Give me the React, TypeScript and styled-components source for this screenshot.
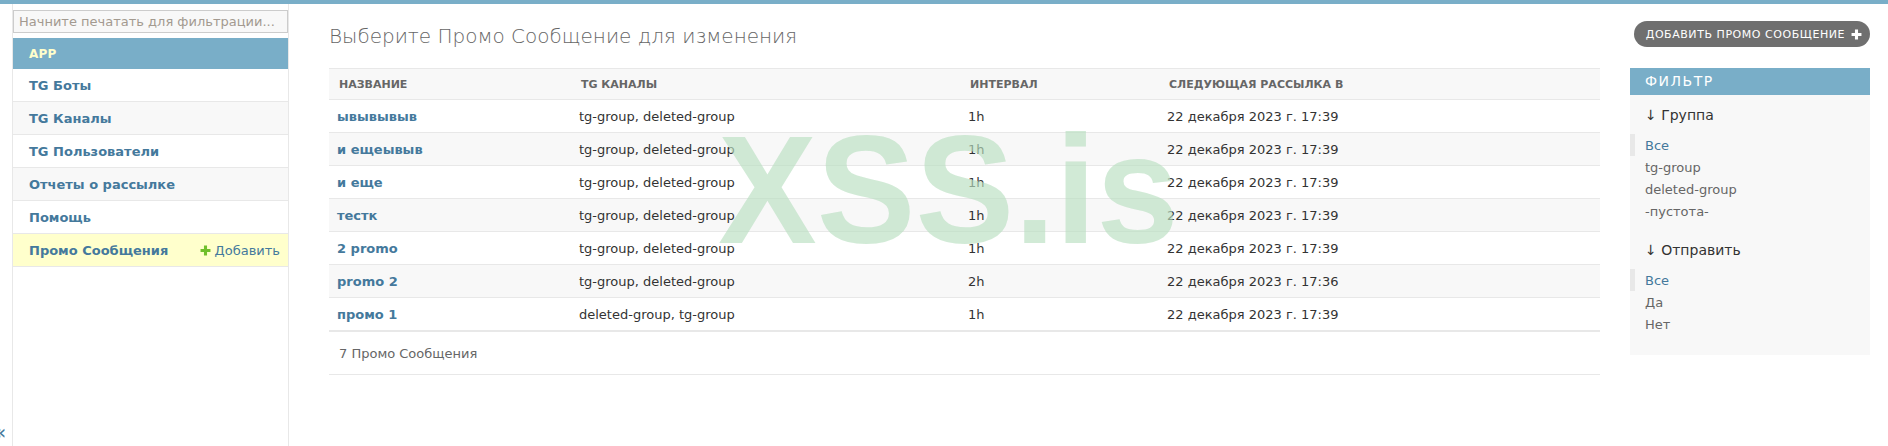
import styled, { createGlobalStyle } from "styled-components";

const GlobalStyle = createGlobalStyle`
  html, body {
    margin: 0;
    padding: 0;
    height: 100%;
    background: #fff;
    color: #333;
    font-family: "DejaVu Sans", "Liberation Sans", sans-serif;
    font-size: 14px;
    overflow: hidden;
  }
  * { box-sizing: border-box; }
`;

const Page = styled.div`
  position: relative;
  height: 446px;
  border-top: 4px solid #79aec8;
  display: flex;
`;

const Sidebar = styled.nav`
  width: 277px;
  margin-left: 12px;
  border-left: 1px solid #e8e8e8;
  border-right: 1px solid #e8e8e8;
  flex-shrink: 0;
`;

const Search = styled.input`
  display: block;
  width: 100%;
  height: 23px;
  margin: 6px 0 5px;
  padding: 0 5px;
  border: 1px solid #ccc;
  background: #f8f8f8;
  font: 13px "DejaVu Sans", sans-serif;
  color: #333;
  &::placeholder { color: #a39a90; opacity: 1; }
`;

const AppCaption = styled.div`
  height: 31px;
  line-height: 32px;
  padding-left: 16px;
  background: #79aec8;
  color: #ffc;
  font-size: 12px;
  font-weight: 700;
  letter-spacing: 0.2px;
`;

const NavRow = styled.div<{ $bg: string }>`
  height: 33px;
  padding: 1px 8px 0 16px;
  display: flex;
  align-items: center;
  justify-content: space-between;
  background: ${(p) => p.$bg};
  border-bottom: 1px solid #e8e8e8;
  font-size: 13px;
  color: #44799c;
`;

const NavName = styled.span`
  font-weight: 700;
`;

const AddLink = styled.span`
  display: flex;
  align-items: center;
  gap: 4px;
`;

const Collapse = styled.span`
  position: absolute;
  left: -6px;
  top: 416px;
  font-size: 20px;
  line-height: 24px;
  color: #44799c;
`;

const Content = styled.main`
  flex: 1;
  min-width: 0;
  padding: 20px 18px 0 40px;
`;

const TitleRow = styled.div`
  display: flex;
  justify-content: space-between;
  align-items: flex-start;
  height: 44px;
`;

const Title = styled.h1`
  margin: 0;
  font-size: 20px;
  line-height: 24px;
  font-weight: 300;
  color: #666;
`;

const AddButton = styled.a`
  margin-top: -3px;
  height: 26px;
  padding: 0 8px 0 12px;
  display: flex;
  align-items: center;
  gap: 6px;
  border-radius: 13px;
  background: #6f6f6f;
  color: #fff;
  font-size: 11px;
  letter-spacing: 0.55px;
`;

const Columns = styled.div`
  display: flex;
  gap: 30px;
  align-items: flex-start;
`;

const ListArea = styled.div`
  flex: 1;
  min-width: 0;
`;

const Table = styled.table`
  width: 100%;
  table-layout: fixed;
  border-collapse: collapse;
  border-bottom: 2px solid #e8e8e8;
`;

const Col = styled.col<{ $w?: number }>`
  width: ${(p) => (p.$w ? `${p.$w}px` : "auto")};
`;

const Th = styled.th`
  height: 31px;
  padding: 0 10px;
  background: #f8f8f8;
  border-top: 1px solid #e8e8e8;
  border-bottom: 1px solid #e8e8e8;
  text-align: left;
  font-size: 11px;
  font-weight: 700;
  text-transform: uppercase;
  color: #666;
`;

const Tr = styled.tr`
  &:nth-child(even) td { background: #f8f8f8; }
  &:last-child td { border-bottom: 0; }
`;

const Td = styled.td`
  height: 33px;
  padding: 1px 8px 0;
  border-bottom: 1px solid #e8e8e8;
  background: #fff;
  font-size: 13px;
  color: #333;
`;

const NameLink = styled.a`
  font-weight: 700;
  color: #44799c;
`;

const Paginator = styled.p`
  margin: 0;
  height: 43px;
  line-height: 43px;
  padding-left: 10px;
  border-bottom: 1px solid #e8e8e8;
  font-size: 13px;
  color: #666;
`;

const FilterPanel = styled.aside`
  width: 240px;
  flex-shrink: 0;
  background: #f8f8f8;
  padding-bottom: 20px;
`;

const FilterTitle = styled.h2`
  margin: 0;
  height: 27px;
  line-height: 27px;
  padding-left: 15px;
  background: #79aec8;
  color: #fff;
  font-size: 14px;
  font-weight: 400;
  letter-spacing: 1.5px;
`;

const FilterHeading = styled.h3`
  margin: 0;
  padding: 12px 15px 0;
  height: 39px;
  font-size: 14px;
  line-height: 16px;
  font-weight: 400;
  color: #333;
`;

const FilterList = styled.ul`
  margin: 0;
  padding: 0;
  list-style: none;
`;

const FilterItem = styled.li<{ $selected?: boolean }>`
  height: 22px;
  line-height: 24px;
  padding-left: ${(p) => (p.$selected ? 10 : 15)}px;
  border-left: ${(p) => (p.$selected ? "5px solid #e8e8e8" : "0")};
  font-size: 13px;
  color: ${(p) => (p.$selected ? "#44799c" : "#666")};
`;

const FilterGroup = styled.div`
  &:first-of-type { margin-bottom: 8px; }
`;

const Watermark = styled.div`
  position: absolute;
  left: 718px;
  top: 108px;
  font-family: "Liberation Sans", Arial, sans-serif;
  font-size: 148px;
  line-height: 160px;
  font-weight: 700;
  color: rgba(185, 222, 192, 0.65);
  transform: scaleY(1.04);
  transform-origin: 0 131px;
  pointer-events: none;
`;

function Plus({ color, size }: { color: string; size: number }) {
  return (
    <svg width={size} height={size} viewBox="0 0 10 10" aria-hidden="true">
      <path d="M3.6 0.5h2.8v3.1h3.1v2.8H6.4v3.1H3.6V6.4H0.5V3.6h3.1z" fill={color} />
    </svg>
  );
}

const navItems = ["TG Боты", "TG Каналы", "TG Пользователи", "Отчеты о рассылке", "Помощь"];

const rows = [
  { name: "ывывывыв", channels: "tg-group, deleted-group", interval: "1h", next: "22 декабря 2023 г. 17:39" },
  { name: "и ещеывыв", channels: "tg-group, deleted-group", interval: "1h", next: "22 декабря 2023 г. 17:39" },
  { name: "и еще", channels: "tg-group, deleted-group", interval: "1h", next: "22 декабря 2023 г. 17:39" },
  { name: "тестк", channels: "tg-group, deleted-group", interval: "1h", next: "22 декабря 2023 г. 17:39" },
  { name: "2 promo", channels: "tg-group, deleted-group", interval: "1h", next: "22 декабря 2023 г. 17:39" },
  { name: "promo 2", channels: "tg-group, deleted-group", interval: "2h", next: "22 декабря 2023 г. 17:36" },
  { name: "промо 1", channels: "deleted-group, tg-group", interval: "1h", next: "22 декабря 2023 г. 17:39" },
];

const filters = [
  { title: "Группа", items: ["Все", "tg-group", "deleted-group", "-пустота-"] },
  { title: "Отправить", items: ["Все", "Да", "Нет"] },
];

export default function App() {
  return (
    <>
      <GlobalStyle />
      <Page>
        <Sidebar>
          <Search placeholder="Начните печатать для фильтрации..." />
          <AppCaption>APP</AppCaption>
          {navItems.map((item, i) => (
            <NavRow key={item} $bg={i % 2 ? "#f8f8f8" : "#fff"}>
              <NavName>{item}</NavName>
            </NavRow>
          ))}
          <NavRow $bg="#ffc">
            <NavName>Промо Сообщения</NavName>
            <AddLink>
              <Plus color="#70bf2b" size={11} />
              Добавить
            </AddLink>
          </NavRow>
        </Sidebar>
        <Collapse>«</Collapse>
        <Content>
          <TitleRow>
            <Title>Выберите Промо Сообщение для изменения</Title>
            <AddButton>
              ДОБАВИТЬ ПРОМО СООБЩЕНИЕ
              <Plus color="#fff" size={11} />
            </AddButton>
          </TitleRow>
          <Columns>
            <ListArea>
              <Table>
                <colgroup>
                  <Col $w={242} />
                  <Col $w={389} />
                  <Col $w={199} />
                  <Col />
                </colgroup>
                <thead>
                  <tr>
                    <Th>Название</Th>
                    <Th>TG Каналы</Th>
                    <Th>Интервал</Th>
                    <Th>Следующая рассылка в</Th>
                  </tr>
                </thead>
                <tbody>
                  {rows.map((row) => (
                    <Tr key={row.name}>
                      <Td>
                        <NameLink>{row.name}</NameLink>
                      </Td>
                      <Td>{row.channels}</Td>
                      <Td>{row.interval}</Td>
                      <Td>{row.next}</Td>
                    </Tr>
                  ))}
                </tbody>
              </Table>
              <Paginator>7 Промо Сообщения</Paginator>
            </ListArea>
            <FilterPanel>
              <FilterTitle>ФИЛЬТР</FilterTitle>
              {filters.map((group) => (
                <FilterGroup key={group.title}>
                  <FilterHeading>↓ {group.title}</FilterHeading>
                  <FilterList>
                    {group.items.map((item, i) => (
                      <FilterItem key={item} $selected={i === 0}>
                        {item}
                      </FilterItem>
                    ))}
                  </FilterList>
                </FilterGroup>
              ))}
            </FilterPanel>
          </Columns>
        </Content>
        <Watermark>XSS.is</Watermark>
      </Page>
    </>
  );
}
